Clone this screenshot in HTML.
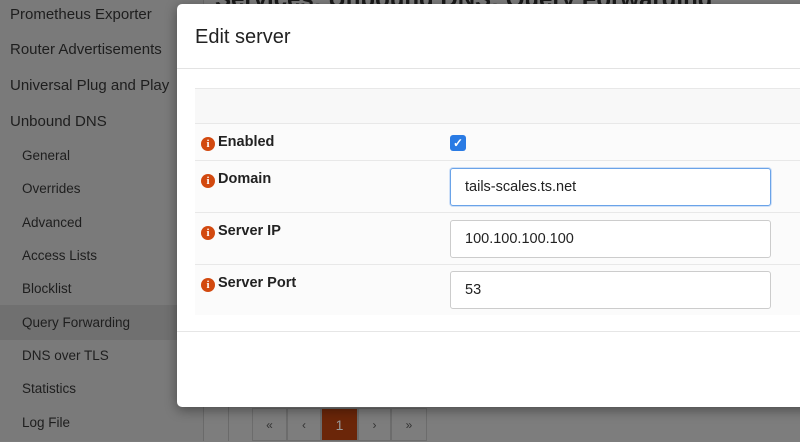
<!DOCTYPE html>
<html><head><meta charset="utf-8"><style>
*{box-sizing:border-box;margin:0;padding:0}
body{width:800px;height:441px;overflow:hidden;position:relative;background:#7d7d7d;font-family:"Liberation Sans",sans-serif}
.side{position:absolute;left:0;top:0;width:204px;height:441px;background:#7a7a7a;border-right:1px solid #6a6a6a}
.it{position:absolute;left:10px;font-size:15px;color:#1e1e1e}
.sub{position:absolute;left:22px;font-size:13.5px;color:#1e1e1e}
.sel{position:absolute;left:0;top:305px;width:204px;height:35px;background:#707070}
.vl{position:absolute;top:405px;height:36px;border-left:1px solid #6a6a6a}
.pg{position:absolute;top:408px;height:33px;border:1px solid #6c6c6c;color:#333;font-size:12px;text-align:center;line-height:33px}
.modal{position:absolute;left:177px;top:4px;width:640px;height:403px;background:#fff;border-radius:5px;box-shadow:0 3px 12px rgba(0,0,0,.4)}
.hd{position:absolute;left:0;top:0;width:100%;height:65px;border-bottom:1px solid #e3e3e3}
.hd span{position:absolute;left:18px;top:22px;font-size:20px;color:#222}
.row{position:absolute;left:18px;width:622px;border-top:1px solid #e8e8e8;background:#fbfbfb}
.lab{position:absolute;left:6px;top:10px;font-size:14.5px;font-weight:bold;color:#222}
.ic{display:inline-block;width:14px;height:14px;border-radius:50%;background:#d2490f;color:#fff;font-size:11px;line-height:14px;text-align:center;font-weight:bold;vertical-align:-1px;margin-right:3px;font-family:"Liberation Serif",serif}
.inp{position:absolute;left:255px;width:321px;height:38px;border:1px solid #ccc;border-radius:3px;background:#fff;font-size:14.5px;color:#222;padding-left:14px;line-height:36px}
</style></head><body>
<div class="side">
<div class="it" style="top:6px">Prometheus Exporter</div>
<div class="it" style="top:41px">Router Advertisements</div>
<div class="it" style="top:77px">Universal Plug and Play</div>
<div class="it" style="top:113px">Unbound DNS</div>
<div class="sel"></div>
<div class="sub" style="top:148px">General</div>
<div class="sub" style="top:181px">Overrides</div>
<div class="sub" style="top:215px">Advanced</div>
<div class="sub" style="top:248px">Access Lists</div>
<div class="sub" style="top:281px">Blocklist</div>
<div class="sub" style="top:315px">Query Forwarding</div>
<div class="sub" style="top:348px">DNS over TLS</div>
<div class="sub" style="top:381px">Statistics</div>
<div class="sub" style="top:415px">Log File</div>
</div>
<div style="position:absolute;left:215px;top:-14px;font-size:24px;font-weight:bold;color:#1a1a1a">Services: Unbound DNS: Query Forwarding</div>
<div class="vl" style="left:228px"></div>
<div class="pg" style="left:252px;width:35px">«</div>
<div class="pg" style="left:287px;width:34px">‹</div>
<div class="pg" style="left:321px;width:37px;background:#6b2609;color:#999;font-size:14px">1</div>
<div class="pg" style="left:358px;width:33px">›</div>
<div class="pg" style="left:391px;width:36px">»</div>
<div class="modal">
<div class="hd"><span>Edit server</span></div>
<div class="row" style="top:84px;height:36px;background:#f8f8f8"></div>
<div class="row" style="top:119px;height:37px"><div class="lab"><span class="ic">i</span>Enabled</div>
<div style="position:absolute;left:255px;top:11px;width:16px;height:16px;background:#2a7be4;border-radius:3px;color:#fff;font-size:12px;line-height:16px;text-align:center;font-weight:bold">✓</div></div>
<div class="row" style="top:156px;height:52px"><div class="lab"><span class="ic">i</span>Domain</div>
<div class="inp" style="top:7px;border:1px solid #6aa3e8;box-shadow:0 0 0 1px #cfe0f7">tails-scales.ts.net</div></div>
<div class="row" style="top:208px;height:52px"><div class="lab"><span class="ic">i</span>Server IP</div>
<div class="inp" style="top:7px">100.100.100.100</div></div>
<div class="row" style="top:260px;height:51px"><div class="lab"><span class="ic">i</span>Server Port</div>
<div class="inp" style="top:6px">53</div></div>
<div style="position:absolute;left:0;top:327px;width:100%;border-top:1px solid #e6e6e6"></div>
</div>
</body></html>
